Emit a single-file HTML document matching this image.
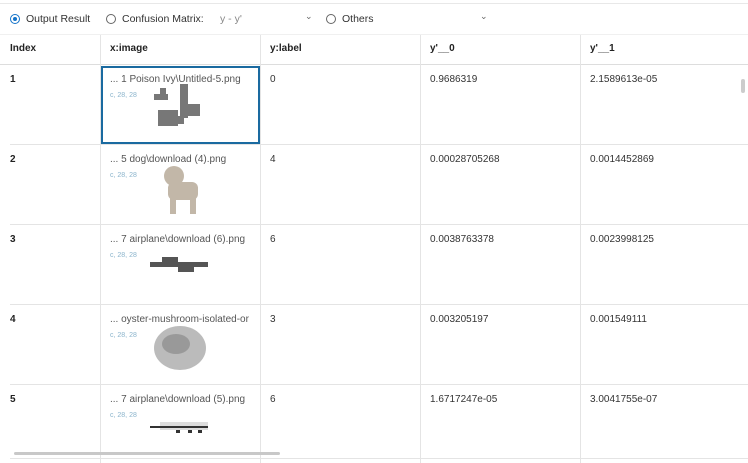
<!DOCTYPE html>
<html><head><style>
*{box-sizing:border-box;margin:0;padding:0}
body{width:748px;height:463px;overflow:hidden;background:#fff;font-family:"Liberation Sans","DejaVu Sans",sans-serif;font-size:10px;color:#333;position:relative}
.topline{position:absolute;left:0;right:0;top:3px;height:1px;background:#e8e8e8}
.radio{position:absolute;top:13px;display:flex;align-items:center;color:#333;font-size:10.5px}
.rb{width:10px;height:10px;border:1px solid #666;border-radius:50%;margin-right:6px;position:relative}
.rb.on{border-color:#1473c9}
.rb.on::after{content:"";position:absolute;left:2px;top:2px;width:4px;height:4px;border-radius:50%;background:#1473c9}
.chev{position:absolute;top:11px;font-size:9px;color:#666}
.hline{position:absolute;left:0;right:0;height:1px;background:#e4e4e4}
.vline{position:absolute;width:1px;background:#e4e4e4;top:35px;bottom:0}
.t{position:absolute;white-space:nowrap}
.h{font-weight:bold;color:#222;top:43px}
.b{font-weight:bold;color:#222}
.sub{position:absolute;font-size:7px;color:#8bb4cc}
</style></head><body>
<div class="topline"></div>
<div class="radio" style="left:10px"><span class="rb on"></span>Output Result</div>
<div class="radio" style="left:106px"><span class="rb"></span>Confusion Matrix:</div>
<div class="t" style="left:220px;top:13px;color:#888;font-size:10.5px">y - y'</div>
<div class="chev" style="left:305px">⌄</div>
<div class="radio" style="left:326px"><span class="rb"></span>Others</div>
<div class="chev" style="left:480px">⌄</div>
<div class="hline" style="top:34px;background:#f0f0f0"></div>
<div class="hline" style="top:64px;background:#ddd"></div>
<div class="hline" style="top:144px;left:10px"></div>
<div class="hline" style="top:224px;left:10px"></div>
<div class="hline" style="top:304px;left:10px"></div>
<div class="hline" style="top:384px;left:10px"></div>
<div class="hline" style="top:458px;left:10px"></div>
<div class="vline" style="left:100px"></div>
<div class="vline" style="left:260px"></div>
<div class="vline" style="left:420px"></div>
<div class="vline" style="left:580px"></div>
<div class="t h" style="left:10px">Index</div>
<div class="t h" style="left:110px">x:image</div>
<div class="t h" style="left:270px">y:label</div>
<div class="t h" style="left:430px">y'__0</div>
<div class="t h" style="left:590px">y'__1</div>

<div style="position:absolute;left:101px;top:66px;width:159px;height:78px;border:2px solid #1a6aa0"></div>

<div class="t b" style="left:10px;top:74px">1</div>
<div class="t" style="left:110px;top:74px;color:#555">... 1 Poison Ivy\Untitled-5.png</div>
<div class="sub" style="left:110px;top:92px">c, 28, 28</div>
<svg style="position:absolute;left:150px;top:82px" width="60" height="50"><g fill="#777"><rect x="4" y="12" width="14" height="6"/><rect x="10" y="6" width="6" height="12"/><rect x="30" y="2" width="8" height="34"/><rect x="34" y="22" width="16" height="12"/><rect x="8" y="28" width="20" height="16"/><rect x="24" y="34" width="10" height="8"/></g></svg>
<div class="t" style="left:270px;top:74px">0</div>
<div class="t" style="left:430px;top:74px">0.9686319</div>
<div class="t" style="left:590px;top:74px">2.1589613e-05</div>

<div class="t b" style="left:10px;top:154px">2</div>
<div class="t" style="left:110px;top:154px;color:#555">... 5 dog\download (4).png</div>
<div class="sub" style="left:110px;top:172px">c, 28, 28</div>
<svg style="position:absolute;left:160px;top:164px" width="45" height="52"><g fill="#c2b7a8"><ellipse cx="14" cy="12" rx="10" ry="10"/><rect x="8" y="18" width="30" height="18" rx="6"/><rect x="10" y="34" width="6" height="16"/><rect x="30" y="34" width="6" height="16"/></g></svg>
<div class="t" style="left:270px;top:154px">4</div>
<div class="t" style="left:430px;top:154px">0.00028705268</div>
<div class="t" style="left:590px;top:154px">0.0014452869</div>

<div class="t b" style="left:10px;top:234px">3</div>
<div class="t" style="left:110px;top:234px;color:#555">... 7 airplane\download (6).png</div>
<div class="sub" style="left:110px;top:252px">c, 28, 28</div>
<svg style="position:absolute;left:148px;top:252px" width="64" height="26"><g fill="#555"><rect x="2" y="10" width="58" height="5"/><rect x="14" y="5" width="16" height="5"/><rect x="30" y="15" width="16" height="5"/></g></svg>
<div class="t" style="left:270px;top:234px">6</div>
<div class="t" style="left:430px;top:234px">0.0038763378</div>
<div class="t" style="left:590px;top:234px">0.0023998125</div>

<div class="t b" style="left:10px;top:314px">4</div>
<div class="t" style="left:110px;top:314px;color:#555">... oyster-mushroom-isolated-or</div>
<div class="sub" style="left:110px;top:332px">c, 28, 28</div>
<svg style="position:absolute;left:150px;top:324px" width="60" height="52"><ellipse cx="30" cy="24" rx="26" ry="22" fill="#bbb"/><ellipse cx="26" cy="20" rx="14" ry="10" fill="#999"/></svg>
<div class="t" style="left:270px;top:314px">3</div>
<div class="t" style="left:430px;top:314px">0.003205197</div>
<div class="t" style="left:590px;top:314px">0.001549111</div>

<div class="t b" style="left:10px;top:394px">5</div>
<div class="t" style="left:110px;top:394px;color:#555">... 7 airplane\download (5).png</div>
<div class="sub" style="left:110px;top:412px">c, 28, 28</div>
<svg style="position:absolute;left:148px;top:406px" width="64" height="30"><g fill="#ddd"><rect x="12" y="16" width="48" height="8"/></g><rect x="2" y="20" width="58" height="2" fill="#333"/><g fill="#333"><rect x="28" y="24" width="4" height="3"/><rect x="40" y="24" width="4" height="3"/><rect x="50" y="24" width="4" height="3"/></g></svg>
<div class="t" style="left:270px;top:394px">6</div>
<div class="t" style="left:430px;top:394px">1.6717247e-05</div>
<div class="t" style="left:590px;top:394px">3.0041755e-07</div>

<div style="position:absolute;left:741px;top:79px;width:4px;height:14px;background:#ccc;border-radius:2px"></div>
<div style="position:absolute;left:14px;top:452px;width:266px;height:3px;background:#c8c8c8;border-radius:2px"></div>
</body></html>
